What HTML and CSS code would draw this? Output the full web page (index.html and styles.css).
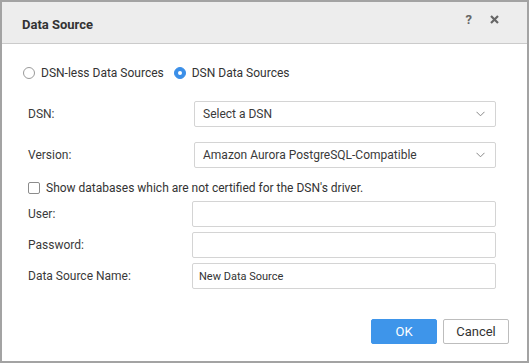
FILE: index.html
```html
<!DOCTYPE html>
<html>
<head>
<meta charset="utf-8">
<link rel="stylesheet" href="styles.css">
</head>
<body>
<div class="dialog">
  <div class="header">
    <div class="title">Data Source</div>
    <div class="tools">
      <span class="help">?</span>
      <svg class="close" width="9" height="9" viewBox="0 0 9 9"><path d="M1 1L8 8M8 1L1 8" stroke="#666" stroke-width="2.2" stroke-linecap="butt"/></svg>
    </div>
  </div>
  <div class="content">
    <div class="radios">
      <label class="radio"><span class="circle"></span>DSN-less Data Sources</label>
      <label class="radio"><span class="circle on"></span>DSN Data Sources</label>
    </div>
    <div class="row first">
      <div class="lbl">DSN:</div>
      <div class="select">Select a DSN<svg class="chev" width="9" height="6" viewBox="0 0 9 6"><path d="M0.5 0.8L4.5 4.8L8.5 0.8" fill="none" stroke="#888" stroke-width="1"/></svg></div>
    </div>
    <div class="row second">
      <div class="lbl">Version:</div>
      <div class="select">Amazon Aurora PostgreSQL-Compatible<svg class="chev" width="9" height="6" viewBox="0 0 9 6"><path d="M0.5 0.8L4.5 4.8L8.5 0.8" fill="none" stroke="#888" stroke-width="1"/></svg></div>
    </div>
    <label class="check"><span class="box"></span>Show databases which are not certified for the DSN's driver.</label>
    <div class="row field">
      <div class="lbl">User:</div>
      <div class="input"></div>
    </div>
    <div class="row field">
      <div class="lbl">Password:</div>
      <div class="input"></div>
    </div>
    <div class="row field">
      <div class="lbl">Data Source Name:</div>
      <div class="input small">New Data Source</div>
    </div>
  </div>
  <div class="footer">
    <button class="btn primary">OK</button>
    <button class="btn">Cancel</button>
  </div>
</div>
</body>
</html>
```
FILE: styles.css
```css
html, body { margin: 0; padding: 0; background: #fff; }
body { font-family: Roboto, "Liberation Sans", sans-serif; font-size: 12px; color: #3a3a3a; }
.dialog {
  width: 529px; height: 363px; box-sizing: border-box;
  border: 2px solid #a3a3a3; background: #fff;
  display: flex; flex-direction: column;
}
.header {
  height: 41px; background: #ededed; border-bottom: 1px solid #cbcbcb;
  display: flex; align-items: center; justify-content: space-between;
  padding: 0 28px 0 20px;
}
.title { font-size: 13px; font-weight: 700; color: #333; padding-top: 3px; }
.tools { display: flex; align-items: center; gap: 18px; margin-top: -6px; }
.help { font-weight: 700; font-size: 13px; color: #666; }
.close { display: block; }
.content { flex: 1; padding: 0 31px 0 21px; }
.radios { display: flex; gap: 10px; margin-top: 21px; height: 16px; align-items: center; }
.radio { display: flex; align-items: center; color: #333; font-size: 12px; }
.circle {
  width: 10px; height: 10px; border: 1px solid #9a9a9a; border-radius: 50%;
  margin-right: 6px; box-sizing: content-box;
}
.circle.on { border: 1px solid #3b8fe8; background: #3b8fe8; position: relative; }
.circle.on::after {
  content: ""; position: absolute; left: 3px; top: 3px; width: 4px; height: 4px;
  border-radius: 50%; background: #fff;
}
.row { display: flex; align-items: center; }
.lbl { width: 169px; padding-left: 5px; box-sizing: border-box; color: #3a3a3a; }
.row.first { margin-top: 20px; }
.row.second { margin-top: 15px; }
.select {
  flex: 1; margin-left: 2px; height: 26px; box-sizing: border-box;
  border: 1px solid #d4d4d4; border-radius: 2px;
  display: flex; align-items: center; justify-content: space-between;
  padding: 0 10px 0 8px; color: #3a3a3a;
}
.chev { display: block; }
.check { display: flex; align-items: center; margin-top: 13px; margin-left: 5px; height: 14px; color: #333; }
.box {
  width: 10px; height: 10px; border: 1px solid #8c8c8c; border-radius: 2px; margin-right: 6px;
}
.row.field { margin-top: 5px; }
.check + .row.field { margin-top: 6px; }
.input {
  flex: 1; height: 26px; box-sizing: border-box;
  border: 1px solid #d4d4d4; border-radius: 2px;
  display: flex; align-items: center; padding: 0 6px;
}
.input.small { font-size: 11px; color: #333; }
.footer {
  display: flex; justify-content: flex-end; gap: 6px;
  padding: 0 18px 17px 0;
}
.btn {
  width: 66px; height: 25px; box-sizing: border-box; border-radius: 2px;
  font-family: Roboto, "Liberation Sans", sans-serif; font-size: 13px;
  background: #fff; border: 1px solid #bdbdbd; color: #333; padding: 0;
}
.btn.primary { background: #3e95ea; border-color: #3e95ea; color: #fff; }
```
